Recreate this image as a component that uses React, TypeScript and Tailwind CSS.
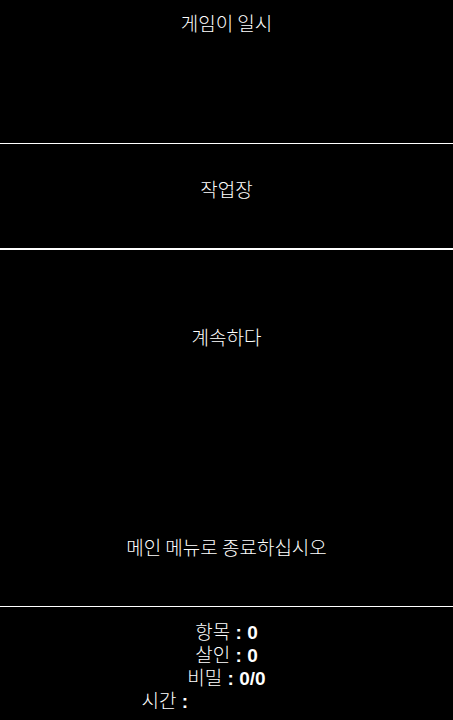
import React from 'react';

const Stat: React.FC<{ label: string; value: string; pad?: string }> = ({ label, value, pad }) => (
  <div className="h-[23px] leading-[23px]">
    <span>{label}</span>
    <span className="font-bold"> : {value}</span>
    {pad && <span className={`inline-block ${pad}`} />}
  </div>
);

const App: React.FC = () => {
  return (
    <div
      className="flex h-[720px] w-full flex-col overflow-hidden bg-black text-[19px] font-light text-white"
      style={{ fontFamily: '"Noto Sans CJK KR", "Noto Sans", sans-serif' }}
    >
      {/* paused title */}
      <div className="h-[144px] shrink-0 border-b border-white pt-[11px] text-center leading-6">
        게임이 일시
      </div>

      {/* workshop */}
      <div className="h-[106px] shrink-0 border-b-2 border-white pt-[33px] text-center leading-6">
        작업장
      </div>

      {/* menu actions */}
      <div className="flex h-[357px] shrink-0 flex-col items-center border-b border-white pt-[75px] leading-6">
        <div>계속하다</div>
        <div className="mt-[186px]">메인 메뉴로 종료하십시오</div>
      </div>

      {/* stats */}
      <div
        className="flex flex-1 flex-col items-center pt-[14px]"
        style={{ fontFamily: '"Liberation Sans", "Noto Sans CJK KR", sans-serif' }}
      >
        <Stat label="항목" value="0" />
        <Stat label="살인" value="0" />
        <Stat label="비밀" value="0/0" />
        <Stat label="시간" value="" pad="w-[118px]" />
      </div>
    </div>
  );
};

export default App;
